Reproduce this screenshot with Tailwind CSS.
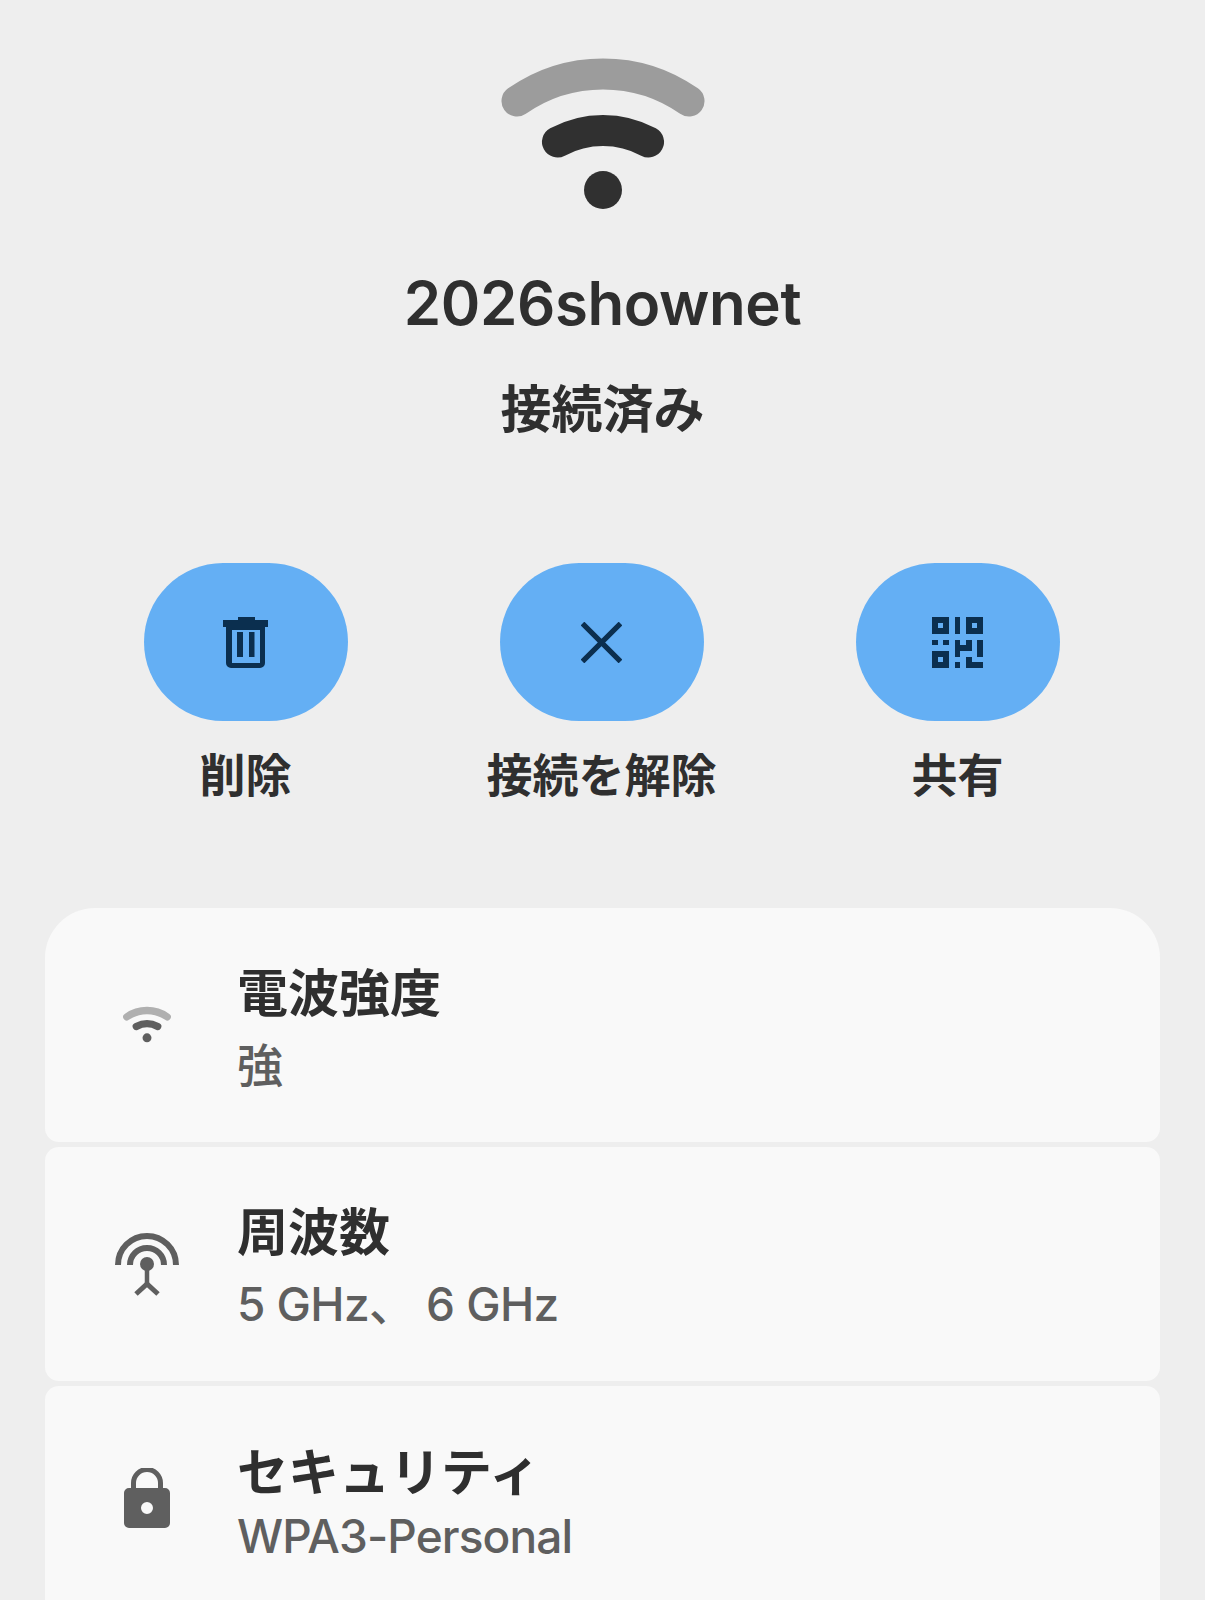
<!DOCTYPE html>
<html lang="ja">
<head>
    <meta charset="UTF-8">
    <meta name="viewport" content="width=device-width, initial-scale=1.0">
    <title>2026shownet</title>
    <script src="https://cdn.jsdelivr.net/npm/@tailwindcss/browser@4"></script>
</head>
<body class="bg-[#eeeeee] h-[1600px] overflow-hidden font-['Inter','Noto_Sans_CJK_JP',sans-serif] text-[#2f2f2f]">
    <div class="flex flex-col items-center pt-[59px]">
        <!-- wifi -->
        <svg class="w-[204px] h-[150px] overflow-visible" viewBox="0 0 204 150">
            <path d="M16 42A150 150 0 0 1 188 42" fill="none" stroke="#9c9c9c" stroke-width="31" stroke-linecap="round"/>
            <path d="M56.5 83A96 96 0 0 1 147.5 83" fill="none" stroke="#303030" stroke-width="31" stroke-linecap="round"/>
            <circle cx="102" cy="131" r="19" fill="#303030"/>
        </svg>
        <h1 class="mt-[58px] text-[60px] leading-[72px] font-semibold tracking-[-0.4px]">2026shownet</h1>
        <p class="mt-[35px] text-[51px] leading-[72px] font-bold">接続済み</p>
    </div>

    <div class="flex justify-center gap-[152px] mt-[117px] pr-[2px]">
        <div class="w-[204px] flex flex-col items-center">
            <button class="w-[204px] h-[158px] rounded-full bg-[#64aff4] flex items-center justify-center">
                <svg class="w-[45px] h-[51px]" viewBox="0 0 45 51" fill="#0b2f4f">
                    <path d="M15 0h17v3h13v7H0V3h15z"/>
                    <path fill-rule="evenodd" d="M3 10h39v36a5 5 0 0 1-5 5H8a5 5 0 0 1-5-5zM9 13v33h28V13z"/>
                    <rect x="14" y="15" width="6" height="25"/>
                    <rect x="26" y="15" width="5.5" height="25"/>
                </svg>
            </button>
            <span class="mt-[20px] text-[46px] leading-[68px] font-bold whitespace-nowrap">削除</span>
        </div>
        <div class="w-[204px] flex flex-col items-center">
            <button class="w-[204px] h-[158px] rounded-full bg-[#64aff4] flex items-center justify-center">
                <svg class="w-[41px] h-[41px]" viewBox="0 0 41 41">
                    <path d="M1.5 1.5L39.5 39.5M39.5 1.5L1.5 39.5" stroke="#0b2f4f" stroke-width="5.2" fill="none"/>
                </svg>
            </button>
            <span class="mt-[20px] text-[46px] leading-[68px] font-bold whitespace-nowrap">接続を解除</span>
        </div>
        <div class="w-[204px] flex flex-col items-center">
            <button class="w-[204px] h-[158px] rounded-full bg-[#64aff4] flex items-center justify-center">
                <svg class="w-[51px] h-[51px]" viewBox="0 0 9 9" fill="#0b2f4f" shape-rendering="crispEdges">
                    <path fill-rule="evenodd" d="M0 0h3v3H0zM1 1v1h1V1z"/>
                    <path fill-rule="evenodd" d="M6 0h3v3H6zM7 1v1h1V1z"/>
                    <path fill-rule="evenodd" d="M0 6h3v3H0zM1 7v1h1V7z"/>
                    <path d="M4 0h1v3H4zM0 4h1v1H0zM2 4h1v1H2zM4 4h1v1h1V4h1v2H5v1H4zM8 4h1v3H8zM4 8h1v1H4zM6 7h1v1h2v1H6z"/>
                </svg>
            </button>
            <span class="mt-[20px] text-[46px] leading-[68px] font-bold whitespace-nowrap">共有</span>
        </div>
    </div>

    <div class="mx-[45px] mt-[99px] flex flex-col gap-[5px]">
        <div class="h-[234px] bg-[#f9f9f9] rounded-t-[50px] rounded-b-[14px] flex items-center pl-[72px]">
            <svg class="w-[60px] h-[60px] shrink-0" viewBox="0 0 60 60">
                <g transform="translate(6 12) scale(0.2353)">
                    <path d="M16 42A150 150 0 0 1 188 42" fill="none" stroke="#b0b0b0" stroke-width="31" stroke-linecap="round"/>
                    <path d="M56.5 83A96 96 0 0 1 147.5 83" fill="none" stroke="#5f5f5f" stroke-width="31" stroke-linecap="round"/>
                    <circle cx="102" cy="131" r="19" fill="#5f5f5f"/>
                </g>
            </svg>
            <div class="ml-[60px] pt-[6px]">
                <div class="text-[51px] leading-[72px] font-bold">電波強度</div>
                <div class="mt-[1px] text-[46px] leading-[68px] font-medium text-[#5f5f5f]">強</div>
            </div>
        </div>
        <div class="h-[234px] bg-[#f9f9f9] rounded-[14px] flex items-center pl-[72px]">
            <svg class="w-[60px] h-[60px] shrink-0 overflow-visible" viewBox="0 0 60 60" fill="none" stroke="#5f5f5f">
                <path d="M1 31a29 29 0 0 1 58 0" stroke-width="6"/>
                <path d="M13 31a17 17 0 0 1 34 0" stroke-width="6"/>
                <circle cx="30" cy="30" r="7" fill="#5f5f5f" stroke="none"/>
                <path d="M30 32v19" stroke-width="4.5"/>
                <path d="M19 60L30 50L41 60" stroke-width="5"/>
            </svg>
            <div class="ml-[60px] pt-[6px]">
                <div class="text-[51px] leading-[72px] font-bold">周波数</div>
                <div class="mt-[1px] text-[46px] leading-[68px] font-medium tracking-[-0.6px] text-[#5f5f5f]">5 GHz、 6 GHz</div>
            </div>
        </div>
        <div class="h-[234px] bg-[#f9f9f9] rounded-[14px] flex items-center pl-[72px]">
            <svg class="w-[60px] h-[60px] shrink-0 -mt-[10px]" viewBox="0 0 60 60">
                <path d="M16.5 21v-6a13.5 13.5 0 0 1 27 0v6" fill="none" stroke="#5f5f5f" stroke-width="5"/>
                <path fill="#5f5f5f" fill-rule="evenodd" d="M12 20h36a5 5 0 0 1 5 5v30a5 5 0 0 1-5 5H12a5 5 0 0 1-5-5V25a5 5 0 0 1 5-5zM30 34a6 6 0 1 0 0 12a6 6 0 1 0 0-12z"/>
            </svg>
            <div class="ml-[60px] pb-[3px]">
                <div class="text-[51px] leading-[72px] font-bold">セキュリティ</div>
                <div class="-mt-[3px] text-[46px] leading-[60px] font-medium tracking-[-0.9px] text-[#5f5f5f]">WPA3-Personal</div>
            </div>
        </div>
    </div>
</body>
</html>
